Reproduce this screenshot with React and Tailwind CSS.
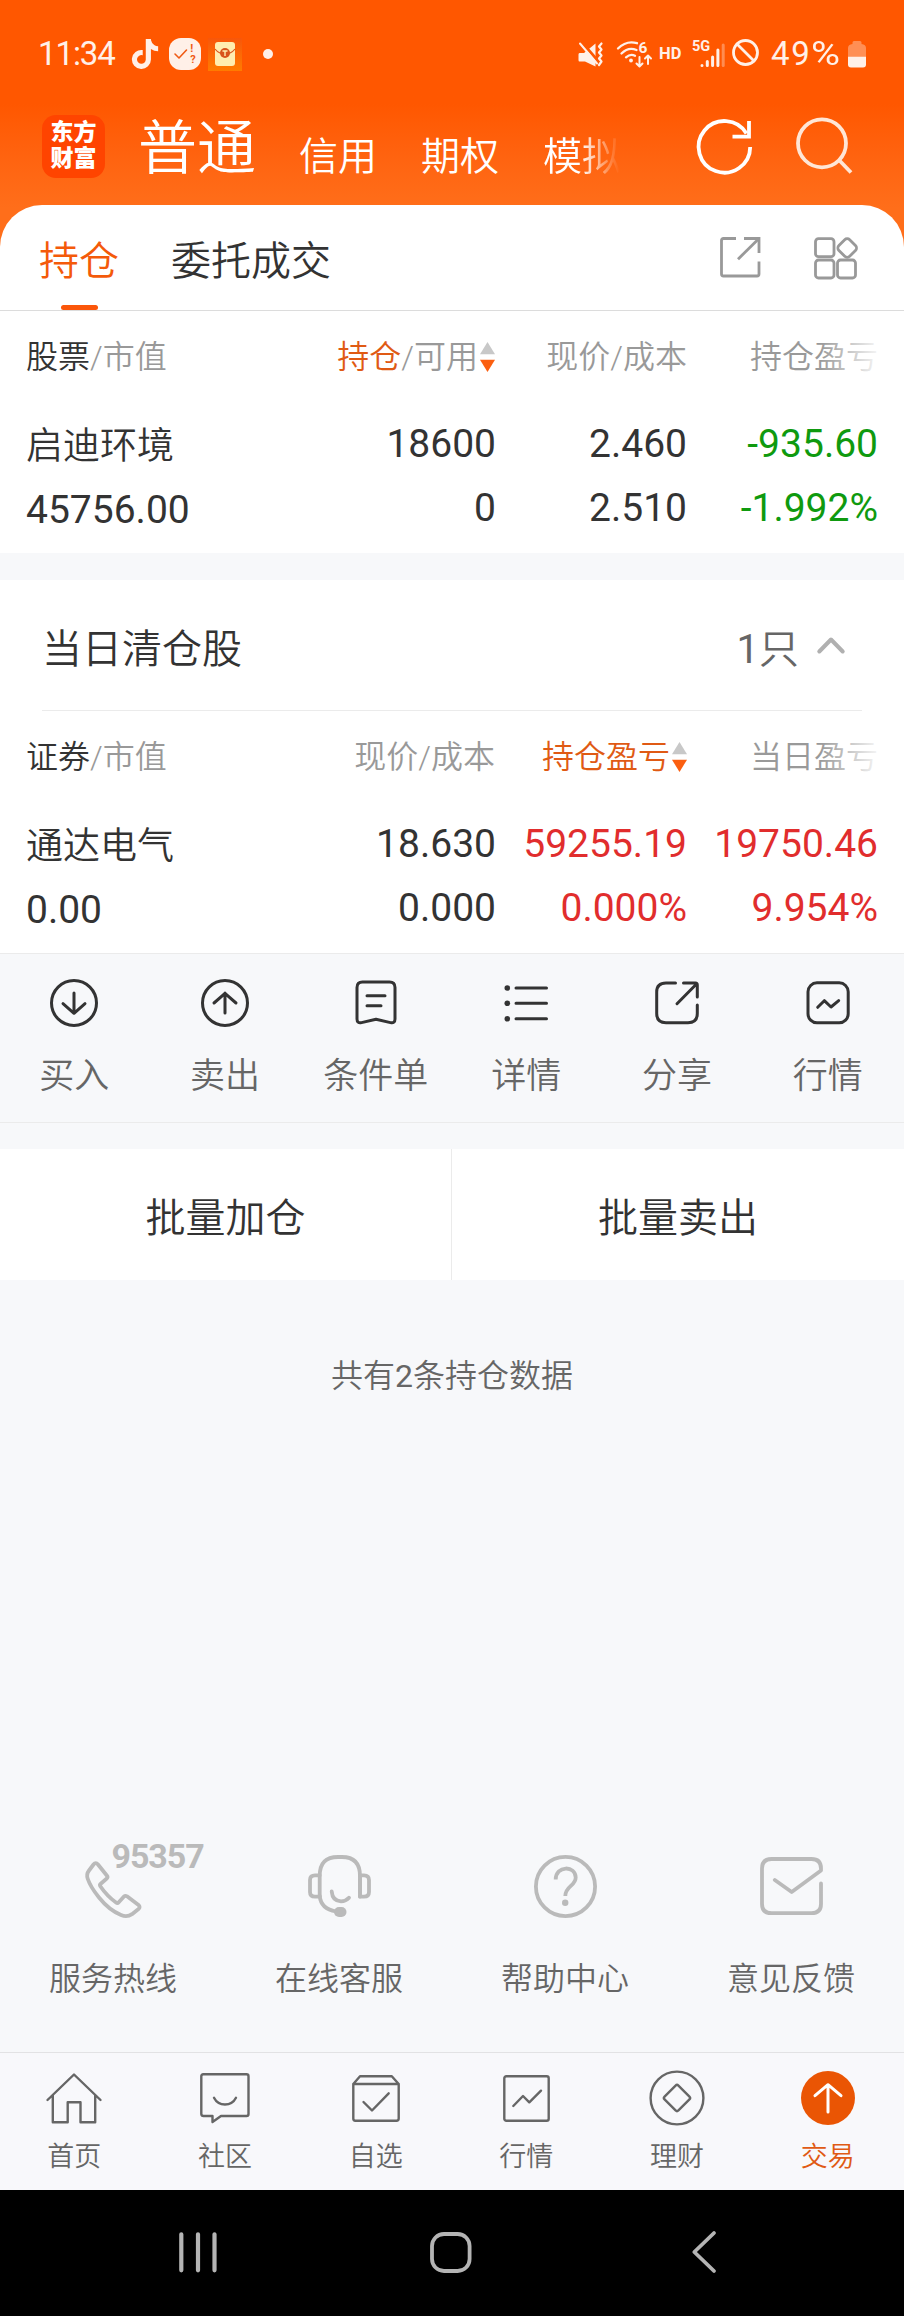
import { FaTiktok } from "react-icons/fa6";

const Svg = ({ w, h, sw = 3, className = "", children }) => (
  <svg
    width={w}
    height={h}
    viewBox={`0 0 ${w} ${h}`}
    fill="none"
    stroke="currentColor"
    strokeWidth={sw}
    strokeLinecap="round"
    strokeLinejoin="round"
    className={`shrink-0 overflow-visible ${className}`}
  >
    {children}
  </svg>
);

// ---- Status bar icons ----

const MuteIcon = () => (
  <Svg w={25} h={25} sw={2}>
    <path d="M1.5 11H6L17.5 1.5V24.5L7 19.5H1.5Q0.5 19.5 0.5 18V12.5Q0.5 11 1.5 11Z" fill="currentColor" stroke="none" />
    <path d="M3.5 0L20 19" stroke="#ff5800" strokeWidth="3" />
    <path d="M2 1.5L19 21.5" />
    <path d="M23.5 1.5L21 4.5L23.5 7.5L21 10.5L23.5 13.5L21 16.5L23.5 19.5L21 23" strokeWidth="2.2" />
  </Svg>
);

const WifiIcon = () => (
  <Svg w={35} h={27} sw={2.3}>
    <path d="M1 7.5Q9.5 -1 20 2.2" />
    <path d="M4.5 12.5Q11.5 5.5 19.5 9" />
    <path d="M9 16.3Q13.5 12.5 18 14.8" />
    <circle cx="14" cy="19.5" r="1.9" fill="currentColor" stroke="none" />
    <path d="M22.5 16V25M19.5 22.5L22.5 25.5L25.5 22.5M31 23V14.5M28 17.5L31 14.5L34 17.5" strokeWidth="2" />
    <text x="21.5" y="11.5" fontSize="15.5" fontWeight="700" fill="currentColor" stroke="none" fontFamily="Roboto, sans-serif">6</text>
  </Svg>
);

const SignalIcon = () => (
  <Svg w={32} h={28} sw={3}>
    <text x="-1" y="10.5" fontSize="14.5" fontWeight="700" fill="currentColor" stroke="none" fontFamily="Roboto, sans-serif">5G</text>
    <path d="M9 25.5V25.6M14.3 21.5V25.6M19.6 17V25.6M24.9 10V25.6" />
    <path d="M30.2 5V25.6" opacity="0.35" />
  </Svg>
);

const BatteryIcon = () => (
  <Svg w={18} h={27} sw={0}>
    <path d="M4.5 3V1.5Q4.5 0 6 0H12Q13.5 0 13.5 1.5V3Q18 3.5 18 7V16H0V7Q0 3.5 4.5 3Z" fill="#ff8f55" />
    <path d="M0 15.7H18V23.5Q18 26.5 15 26.5H3Q0 26.5 0 23.5Z" fill="currentColor" />
  </Svg>
);

function StatusBar() {
  return (
    <div className="flex h-[108px] items-center justify-between pl-[38px] pr-[38px] font-normal text-[#fff0e8]">
      <div className="flex items-center">
        <span className="w-[79px] text-[33px] tracking-[-1.1px]">11:34</span>
        <FaTiktok className="ml-[14px] h-[30px] w-[28px]" />
        <div className="ml-[10px] flex h-8 w-8 items-center justify-center rounded-[12px] bg-[#fff0e8] text-[#ef5a14]">
          <Svg w={13} h={10} sw={1.6}>
            <path d="M1 5L5 9L12.5 1" />
          </Svg>
          <div className="ml-[3px] flex flex-col text-[11px] font-bold leading-[11px]">
            <span>!</span>
            <span>?</span>
          </div>
        </div>
        <div className="ml-[7px] flex h-[33px] w-[34px] items-center justify-center bg-linear-to-b from-[#f8560a] to-[#ff7b00]">
          <svg width="22" height="26" viewBox="0 0 22 26">
            <rect x="1" y="1" width="20" height="24" rx="3" fill="#ffeeb0" />
            <path d="M1 8Q5 13 11 13T21 8" fill="none" stroke="#d8541c" strokeWidth="1.2" />
            <circle cx="11" cy="12" r="5" fill="#d8541c" />
            <path d="M8.5 10H13.5M11 10V15" stroke="#ffeeb0" strokeWidth="1.4" />
          </svg>
        </div>
        <span className="ml-[21px] h-[10px] w-[10px] rounded-full bg-[#fff0e8]" />
      </div>
      <div className="flex items-center">
        <MuteIcon />
        <div className="ml-[14px]">
          <WifiIcon />
        </div>
        <span className="ml-[7px] w-[24px] text-[16.5px] font-bold">HD</span>
        <div className="ml-[10px]">
          <SignalIcon />
        </div>
        <Svg w={27} h={27} sw={2.8} className="ml-[7px] -mt-1">
          <circle cx="13.5" cy="13.5" r="12" />
          <path d="M5 5L22 22" />
        </Svg>
        <span className="ml-[12px] flex w-[74px] text-[33px]">
          <span className="tracking-[1.6px]">49</span>
          <span className="origin-left scale-x-120">%</span>
        </span>
        <div className="ml-[3px]">
          <BatteryIcon />
        </div>
      </div>
    </div>
  );
}

function TitleBar() {
  return (
    <div className="flex h-[76px] items-center pl-[42px] text-white">
      <div className="flex h-[63px] w-[63px] flex-col items-center justify-center rounded-[14px] bg-[#ff4400] text-[23px] font-black leading-[26px]">
        <span>东方</span>
        <span>财富</span>
      </div>
      <h1 className="ml-[33px] pt-[6px] text-[59px] leading-[76px]">普通</h1>
      <div className="ml-[43px] flex gap-[44px] pt-[22px] text-[39px] leading-[56px]">
        <span>信用</span>
        <span>期权</span>
        <span className="[mask-image:linear-gradient(to_right,black_48%,transparent_98%)]">模拟</span>
      </div>
      <Svg w={56} h={58} sw={3.8} className="ml-[76px] mt-[3px]">
        <path d="M53.2 28A25.8 25.8 0 1 1 49.5 14.5" strokeLinecap="butt" />
        <path d="M35.5 17.7H52V2" strokeLinecap="butt" strokeLinejoin="miter" />
      </Svg>
      <Svg w={58} h={58} sw={3.8} className="ml-[43px] text-[#ffe6d6]">
        <circle cx="26" cy="26.3" r="24" />
        <path d="M43 43L55 55.5" strokeLinecap="butt" />
      </Svg>
    </div>
  );
}

// ---- Position tables ----

const SortArrows = () => (
  <svg width="15" height="30" viewBox="0 0 15 30" className="ml-[2px] shrink-0">
    <path d="M7.5 0L15 12.3H0Z" fill="#c8c8c8" />
    <path d="M0 17.7H15L7.5 30Z" fill="#fb5f10" />
  </svg>
);

function PositionTable({ headers, name, value, cells }) {
  return (
    <div className="h-[242px]">
      <div className="relative grid h-[92px] grid-cols-[469px_192px_191px] items-center px-[26px] text-[32px] text-[#999]">
        <div className="flex items-center justify-between">
          <span>
            <span className="text-[#333]">{headers[0][0]}</span>/{headers[0][1]}
          </span>
          {headers[1]}
        </div>
        <div className="flex justify-end">{headers[2]}</div>
        <div className="flex justify-end">{headers[3]}</div>
        <div className="absolute right-[20px] top-0 h-full w-[64px] bg-linear-to-r from-white/0 to-white" />
      </div>
      <div className="grid grid-cols-[280px_190px_191px_191px] px-[26px] pt-[9px] text-[39px] leading-[64px] text-[#333]">
        <div className="pt-[2px]">
          <div className="h-16 pt-[1px] text-[37px]">{name}</div>
          <div className="font-normal">{value}</div>
        </div>
        {cells.map(([top, bottom, color], i) => (
          <div key={i} className={`text-right font-normal ${color}`}>
            <div>{top}</div>
            <div>{bottom}</div>
          </div>
        ))}
      </div>
    </div>
  );
}

// ---- Action bar ----

const actions = [
  {
    label: "买入",
    icon: (
      <>
        <circle cx="24" cy="24" r="22.5" />
        <path d="M24 14V34M13 24.7L24 34.3L35 24.7" />
      </>
    ),
  },
  {
    label: "卖出",
    icon: (
      <>
        <circle cx="24" cy="24" r="22.5" />
        <path d="M24 34V14M13 24L24 14.3L35 24" />
      </>
    ),
  },
  {
    label: "条件单",
    icon: (
      <>
        <path d="M10.5 3H37.5Q43 3 43 8.5V40Q43 44.6 38.5 43.6L24 40.3L9.5 43.6Q5 44.6 5 40V8.5Q5 3 10.5 3Z" />
        <path d="M15 16.8H33M15 26.8H29" />
      </>
    ),
  },
  {
    label: "详情",
    icon: (
      <>
        <path d="M14 9H44.5M14 24.3H44.5M14 39.7H44.5" />
        <g fill="currentColor" stroke="none">
          <circle cx="5.3" cy="9" r="2.8" />
          <circle cx="5.3" cy="24.3" r="2.8" />
          <circle cx="5.3" cy="39.7" r="2.8" />
        </g>
      </>
    ),
  },
  {
    label: "分享",
    icon: (
      <>
        <path d="M22.5 4H13Q3.7 4 3.7 13V34.5Q3.7 43.7 13 43.7H35Q44.3 43.7 44.3 34.5V26" />
        <path d="M30.5 4H42.5Q44.3 4 44.3 6V18M43.5 5L24 24.7" />
      </>
    ),
  },
  {
    label: "行情",
    icon: (
      <>
        <rect x="4" y="3.8" width="40.2" height="40" rx="9" />
        <path d="M13.7 28.3L20.3 21.7L27 28L34.7 21.7" />
      </>
    ),
  },
];

// ---- Service shortcuts ----

const services = [
  {
    label: "服务热线",
    icon: (
      <div className="relative">
        <Svg w={57} h={57} sw={3.8} className="mt-[6px]">
          <path d="M8.5 3.5Q10.7 0.8 13 3.5L21.8 14.5Q23.3 16.3 21.5 17.8L15.2 23.2Q14.5 24 15.5 25.5Q22 35 31 41.5Q32.5 42.7 33.5 41.5L39 35.5Q40.3 34.3 42 35.3L53.5 44Q55.7 46 53.5 48L47 53.2Q42 56.5 36 54Q24 49 14 36.5Q5.5 26 2.8 18Q1 13.5 4 9.5Z" />
        </Svg>
        <span className="absolute left-[27px] top-[-15px] text-[34px] font-bold leading-[33px] tracking-[-1.1px]">95357</span>
      </div>
    ),
  },
  {
    label: "在线客服",
    icon: (
      <Svg w={63} h={62} sw={3.8}>
        <path d="M11.7 41V21Q11.7 2 30 2H34Q52 2 52 21V41.5" />
        <path d="M11.7 20.3H7Q2 20.3 2 25V37Q2 41.7 7 41.7H11.7" />
        <path d="M52 20.3H56Q61 20.3 61 25V37Q61 41.7 56 41.7H52Z" />
        <path d="M11.7 41Q13 54 28 56.5" />
        <rect x="26" y="52" width="12.5" height="10" rx="5" fill="currentColor" stroke="none" />
        <path d="M23.7 36.5Q24.5 46 33 46.3Q38 46.3 41 42.8" />
      </Svg>
    ),
  },
  {
    label: "帮助中心",
    icon: (
      <Svg w={63} h={63} sw={3.8}>
        <circle cx="31.5" cy="31.5" r="29.6" />
        <path d="M21.7 24.5C21.7 10.2 41.7 10.2 41.7 22.5C41.7 31 31.3 31 31.3 41" strokeLinecap="butt" />
        <circle cx="31.2" cy="47.8" r="3.2" fill="currentColor" stroke="none" />
      </Svg>
    ),
  },
  {
    label: "意见反馈",
    icon: (
      <Svg w={63} h={58} sw={3.8}>
        <path d="M61 26.5V47Q61 56.2 51.5 56.2H11.5Q2 56.2 2 47V11.5Q2 2 11.5 2H51.5Q61 2 61 11.5V13.5L31.7 35L14.8 23" />
      </Svg>
    ),
  },
];

// ---- Bottom tabs ----

const tabs = [
  {
    label: "首页",
    icon: (
      <Svg w={56} h={51} sw={2.4}>
        <path d="M1.5 27L28 1.5L54.5 27M6.8 22.5V49.3H21.7V29.3H34.5V49.3H49.2V22.5" />
      </Svg>
    ),
  },
  {
    label: "社区",
    icon: (
      <Svg w={50} h={50} sw={2.4}>
        <path d="M12 43H3.5Q1.3 43 1.3 41V3.3Q1.3 1.3 3.3 1.3H46.5Q48.5 1.3 48.5 3.3V41Q48.5 43 46.5 43H21L12.5 49V43Z" />
        <path d="M14 24.7Q17.5 31.5 25 31.5T36 24.7" />
      </Svg>
    ),
  },
  {
    label: "自选",
    icon: (
      <Svg w={48} h={47} sw={2.4}>
        <path d="M1.3 9V43.5Q1.3 45.7 3.3 45.7H44.5Q46.7 45.7 46.7 43.5V9H1.3L8 1.3H39.8L46.7 9" />
        <path d="M11.5 27L20 35.5L36.7 18.3" />
      </Svg>
    ),
  },
  {
    label: "行情",
    icon: (
      <Svg w={47} h={47} sw={2.4}>
        <rect x="1.3" y="1.3" width="44.4" height="44.4" rx="2" />
        <path d="M10.3 31L20 21L26.3 27.3L38 15.7" />
      </Svg>
    ),
  },
  {
    label: "理财",
    icon: (
      <Svg w={56} h={56} sw={2.4}>
        <circle cx="28" cy="28" r="26.4" />
        <rect x="18.2" y="18.2" width="19.6" height="19.6" rx="2" transform="rotate(45 28 28)" />
      </Svg>
    ),
  },
  {
    label: "交易",
    active: true,
    icon: (
      <Svg w={54} h={54} sw={3}>
        <circle cx="27" cy="27" r="27" fill="#ea5504" stroke="none" />
        <path d="M27 41V13.7M14 24.7L27 13.7L40 24.7" stroke="#fff" />
      </Svg>
    ),
  },
];

export default function App() {
  return (
    <div className="flex h-[2316px] w-[904px] flex-col overflow-hidden bg-[#f7f8fa] font-[Roboto,'Noto_Sans_CJK_SC',sans-serif] [font-weight:350]">
      <header className="h-[260px] shrink-0 bg-linear-to-b from-[#ff5700] from-40% to-[#ff6e1a] to-80%">
        <StatusBar />
        <TitleBar />
      </header>

      {/* Holdings */}
      <section className="-mt-[55px] shrink-0 rounded-t-[42px] bg-white">
        <div className="flex h-[106px] items-start border-b border-[#dcdcdc] pl-[39px] pr-[46px] text-[40px] leading-[40px]">
          <div className="flex h-[105px] flex-col items-center pt-[37px] text-[#f45a0a]">
            <span>持仓</span>
            <span className="mt-auto h-[5px] w-[37px] rounded-full bg-[#fb560a]" />
          </div>
          <span className="ml-[52px] pt-[37px] text-[#333]">委托成交</span>
          <Svg w={41} h={41} sw={2.8} className="ml-auto mt-8 text-[#999]">
            <path d="M16 1.5H3.5Q1.5 1.5 1.5 3.5V37Q1.5 39 3.5 39H37Q39 39 39 37V24.5" strokeLinecap="butt" />
            <path d="M24 1.5H39V16" strokeLinecap="butt" strokeLinejoin="miter" />
            <path d="M39 1.5L18 22.2" strokeLinecap="butt" />
          </Svg>
          <Svg w={44} h={42} sw={2.8} className="ml-[53px] mt-8 text-[#999]">
            <rect x="1.5" y="1.7" width="18.5" height="18" rx="3" />
            <rect x="1.5" y="23" width="18.5" height="18" rx="3" />
            <rect x="23.5" y="23" width="18" height="18" rx="3" />
            <rect x="25.6" y="3.4" width="15.2" height="15.2" rx="3.5" transform="rotate(45 33.2 11)" />
          </Svg>
        </div>
        <PositionTable
          headers={[
            ["股票", "市值"],
            <div className="flex items-center">
              <span className="text-[#e05a14]">持仓</span>/可用
              <SortArrows />
            </div>,
            "现价/成本",
            "持仓盈亏",
          ]}
          name="启迪环境"
          value="45756.00"
          cells={[
            ["18600", "0", ""],
            ["2.460", "2.510", ""],
            ["-935.60", "-1.992%", "text-[#0f9a0f]"],
          ]}
        />
      </section>

      {/* Closed today */}
      <section className="mt-[27px] shrink-0 border-b border-[#ebebeb] bg-white">
        <div className="mx-[42px] flex h-[131px] items-center border-b border-[#ebebeb] pt-[9px] text-[40px]">
          <span className="text-[#333]">当日清仓股</span>
          <span className="ml-auto text-[#666]">
            <span className="font-normal">1</span>只
          </span>
          <Svg w={28} h={17} sw={4} className="ml-[18px] mr-[17px] -mt-2 text-[#b0b0b0]">
            <path d="M2.3 14.5L14 2.5L25.7 14.5" />
          </Svg>
        </div>
        <PositionTable
          headers={[
            ["证券", "市值"],
            <span>现价/成本</span>,
            <div className="flex items-center text-[#e05a14]">
              持仓盈亏
              <SortArrows />
            </div>,
            "当日盈亏",
          ]}
          name="通达电气"
          value="0.00"
          cells={[
            ["18.630", "0.000", ""],
            ["59255.19", "0.000%", "text-[#e12d2d]"],
            ["19750.46", "9.954%", "text-[#e12d2d]"],
          ]}
        />
      </section>

      <div className="grid h-[169px] shrink-0 grid-cols-6 border-b border-[#ebebeb]">
        {actions.map((a) => (
          <div key={a.label} className="flex flex-col items-center pr-[2px] pt-[25px] text-[#333]">
            <Svg w={48} h={48}>{a.icon}</Svg>
            <span className="mt-[25px] text-[35px] leading-[50px] text-[#666]">{a.label}</span>
          </div>
        ))}
      </div>

      <div className="mt-[26px] grid h-[131px] shrink-0 grid-cols-2 bg-white text-[40px] leading-[60px] text-[#333]">
        <button className="border-r border-[#ebebeb] pt-2">批量加仓</button>
        <button className="pt-2">批量卖出</button>
      </div>

      <p className="mt-[76px] text-center text-[32px] leading-[40px] text-[#666]">
        共有<span className="font-normal">2</span>条持仓数据
      </p>

      <div className="mt-auto grid shrink-0 grid-cols-4 pb-[53px]">
        {services.map((s) => (
          <div key={s.label} className="flex flex-col items-center">
            <div className="flex h-16 items-center text-[#bababa]">{s.icon}</div>
            <span className="mt-[41px] text-[32px] leading-[40px] text-[#666]">{s.label}</span>
          </div>
        ))}
      </div>

      <nav className="grid h-[138px] shrink-0 grid-cols-6 border-t border-[#e2e2e4] bg-[#f8f8fb] pt-[17px]">
        {tabs.map((t) => (
          <div key={t.label} className={`flex flex-col items-center pr-[2px] ${t.active ? "text-[#e05a14]" : "text-[#666]"}`}>
            <div className="flex h-14 items-center">{t.icon}</div>
            <span className="mt-[11px] text-[27px] leading-[40px]">{t.label}</span>
          </div>
        ))}
      </nav>

      {/* System navigation */}
      <div className="flex h-[126px] shrink-0 items-center justify-center bg-black pb-[2px] pr-[2px] text-[#b4b4b4]">
        <div className="flex w-[253px] justify-center">
          <Svg w={38} h={41} sw={4.2}>
            <path d="M2.3 2.3V38.3M19 2.3V38.3M35.5 2.3V38.3" />
          </Svg>
        </div>
        <div className="flex w-[253px] justify-center">
          <Svg w={42} h={41} sw={3.8}>
            <rect x="2" y="2" width="37.6" height="37" rx="12" />
          </Svg>
        </div>
        <div className="flex w-[253px] justify-center">
          <Svg w={24} h={42} sw={3.8}>
            <path d="M22 2L2.3 21L22 40" />
          </Svg>
        </div>
      </div>
    </div>
  );
}
